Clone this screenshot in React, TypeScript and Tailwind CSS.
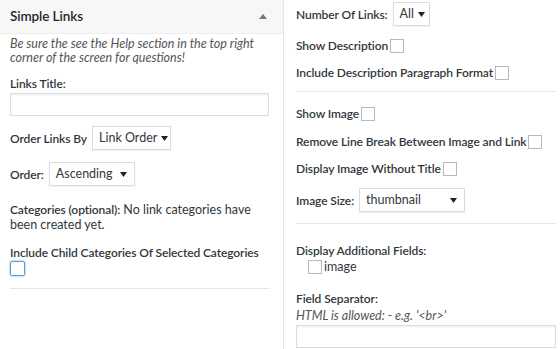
import React from 'react';

function Caret() {
  return (
    <svg width="7" height="5" viewBox="0 0 7 5" className="ml-[4px] shrink-0">
      <path d="M0 0 L7 0 L3.5 5 Z" fill="#222" />
    </svg>
  );
}

function Select({ value, width }: { value: string; width: string }) {
  return (
    <div className={`flex h-[24px] shrink-0 items-center justify-between whitespace-nowrap border border-[#dcdcdc] bg-white pl-[6px] pr-[7px] text-[12.5px] font-normal leading-none tracking-normal text-[#32373c] shadow-[0_1px_1px_rgba(0,0,0,0.05)] ${width}`}>
      <span>{value}</span>
      <Caret />
    </div>
  );
}

function Box({ blue }: { blue?: boolean }) {
  return (
    <span
      className={
        blue
          ? 'inline-block h-[15px] w-[15px] shrink-0 rounded-[2px] border border-[#5b9dd9] shadow-[0_0_2px_rgba(30,140,190,0.8)]'
          : 'inline-block h-[14px] w-[14px] shrink-0 border border-[#b4b9be] bg-white'
      }
    />
  );
}

export default function App() {
  return (
    <div
      className="flex h-[349px] w-[560px] overflow-hidden bg-white text-[12.5px] leading-[15px] text-[#32373c]"
      style={{ fontFamily: 'Lato, "Open Sans", sans-serif' }}
    >
      {/* left metabox */}
      <div className="w-[284px] shrink-0 border-r border-[#e5e5e5]">
        <div className="flex h-[34px] items-center justify-between border-b border-[#eeeeee] bg-[#f7f7f7] pl-[10px] pr-[16px]">
          <span className="text-[13.5px] font-semibold tracking-[-0.1px] text-[#23282d]">Simple Links</span>
          <svg width="8" height="5" viewBox="0 0 8 5">
            <path d="M0 5 L8 5 L4 0 Z" fill="#72777c" />
          </svg>
        </div>
        <div className="pl-[10px] pr-[14px]">
          <p className="mt-[3px] text-[12.5px] italic leading-[14px] text-[#555]">
            Be sure the see the Help section in the top right corner of the screen for questions!
          </p>
          <div className="mt-[11px] text-[12px] font-semibold tracking-[-0.1px]">Links Title:</div>
          <div className="mt-[2px] h-[23px] w-full border border-[#dddddd] shadow-[inset_0_1px_2px_rgba(0,0,0,0.07)]" />
          <div className="mt-[10px] flex items-center gap-[5px] whitespace-nowrap">
            <span className="text-[12px] font-semibold tracking-[-0.1px]">Order Links By</span>
            <Select value="Link Order" width="w-[79px]" />
          </div>
          <div className="mt-[12px] flex items-center gap-[5px] whitespace-nowrap">
            <span className="text-[12px] font-semibold tracking-[-0.1px]">Order:</span>
            <Select value="Ascending" width="w-[86px]" />
          </div>
          <p className="mt-[16px]">
            <span className="text-[12px] font-semibold tracking-[-0.1px]">Categories (optional):</span> No link categories have been created yet.
          </p>
          <div className="mt-[13px] whitespace-nowrap text-[12px] font-semibold tracking-[-0.1px]">Include Child Categories Of Selected Categories</div>
          <div className="mt-[1px] flex">
            <Box blue />
          </div>
          <div className="mt-[12px] border-t border-[#e5e5e5]" />
        </div>
      </div>

      {/* right column */}
      <div className="flex-1 pl-[12px] pr-[4px] text-[12.5px]">
        <div className="mt-[2px] flex items-center gap-[5px] whitespace-nowrap">
          <span className="text-[12px] font-semibold tracking-[-0.1px]">Number Of Links:</span>
          <Select value="All" width="w-[37px]" />
        </div>
        <div className="mt-[12px] flex items-center gap-[2px] whitespace-nowrap">
          <span className="text-[12px] font-semibold tracking-[-0.1px]">Show Description</span>
          <Box />
        </div>
        <div className="mt-[12px] flex items-center gap-[2px] whitespace-nowrap">
          <span className="text-[12px] font-semibold tracking-[-0.1px]">Include Description Paragraph Format</span>
          <Box />
        </div>
        <div className="mt-[11px] border-t border-[#e5e5e5]" />
        <div className="mt-[14px] flex items-center gap-[2px] whitespace-nowrap">
          <span className="text-[12px] font-semibold tracking-[-0.1px]">Show Image</span>
          <Box />
        </div>
        <div className="mt-[13px] flex items-center gap-[2px] whitespace-nowrap">
          <span className="text-[12px] font-semibold tracking-[-0.1px]">Remove Line Break Between Image and Link</span>
          <Box />
        </div>
        <div className="mt-[12px] flex items-center gap-[2px] whitespace-nowrap">
          <span className="text-[12px] font-semibold tracking-[-0.1px]">Display Image Without Title</span>
          <Box />
        </div>
        <div className="mt-[12px] flex items-center gap-[5px] whitespace-nowrap">
          <span className="text-[12px] font-semibold tracking-[-0.1px]">Image Size:</span>
          <Select value="thumbnail" width="w-[106px]" />
        </div>
        <div className="mt-[11px] border-t border-[#e5e5e5]" />
        <div className="mt-[19px] text-[12px] font-semibold tracking-[-0.1px]">Display Additional Fields:</div>
        <div className="mt-[1px] flex items-center gap-[2px] pl-[12px]">
          <Box />
          <span>image</span>
        </div>
        <div className="mt-[17px] text-[12px] font-semibold tracking-[-0.1px]">Field Separator:</div>
        <div className="mt-[2px] italic text-[#555]">HTML is allowed: - e.g. '&lt;br&gt;'</div>
        <div className="mt-[2px] h-[23px] w-full border border-[#dddddd] shadow-[inset_0_1px_2px_rgba(0,0,0,0.07)]" />
      </div>
    </div>
  );
}
